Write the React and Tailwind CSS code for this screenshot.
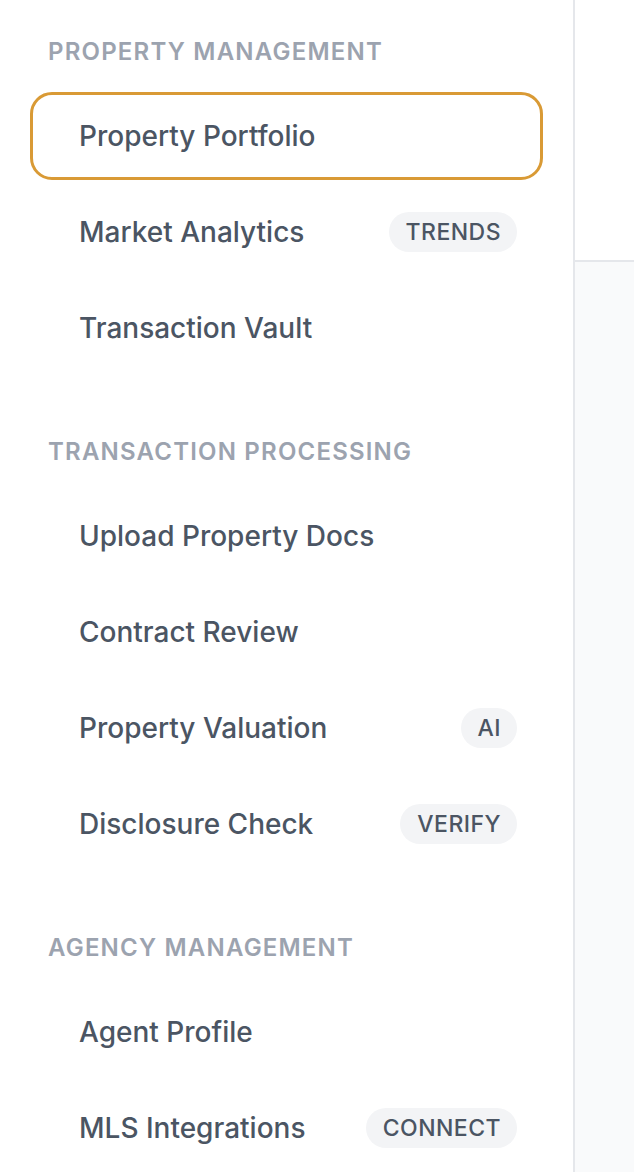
import React from 'react';

const sections = [
    {
        title: 'Property Management',
        items: [
            { label: 'Property Portfolio', active: true },
            { label: 'Market Analytics', badge: 'TRENDS' },
            { label: 'Transaction Vault' },
        ],
    },
    {
        title: 'Transaction Processing',
        items: [
            { label: 'Upload Property Docs' },
            { label: 'Contract Review' },
            { label: 'Property Valuation', badge: 'AI' },
            { label: 'Disclosure Check', badge: 'VERIFY' },
        ],
    },
    {
        title: 'Agency Management',
        items: [
            { label: 'Agent Profile' },
            { label: 'MLS Integrations', badge: 'CONNECT' },
        ],
    },
];

const NavItem = ({ item }) => (
    <a
        href="#"
        className={`flex h-[88px] items-center justify-between rounded-[22px] border-[3px] pl-[46px] pr-[23px] ${
            item.active ? 'border-[#d99a35] bg-white' : 'border-transparent'
        }`}
    >
        <span className="text-[28px] font-medium text-[#4b5563]">{item.label}</span>
        {item.badge && (
            <span className="flex h-[40px] items-center rounded-full bg-[#f3f4f6] pl-[17px] pr-[16px] text-[23px] font-medium tracking-[0.02em] text-[#4b5563]">
                {item.badge}
            </span>
        )}
    </a>
);

const App = () => {
    return (
        <div className="flex h-[1172px] overflow-hidden bg-white" style={{ fontFamily: 'Inter, "Noto Sans", sans-serif' }}>
            {/* Sidebar */}
            <aside className="w-[575px] shrink-0 border-r-2 border-[#e5e7eb] bg-white pt-[36px]">
                <nav className="pl-[30px] pr-[30px]">
                    {sections.map((section, i) => (
                        <div key={section.title} className={i > 0 ? 'mt-[64px]' : ''}>
                            <h3 className="mb-[24px] pl-[18px] text-[24px] leading-[32px] font-semibold uppercase tracking-wider text-[#9ca3af]">
                                {section.title}
                            </h3>
                            <div className="flex flex-col gap-[8px]">
                                {section.items.map(item => (
                                    <NavItem key={item.label} item={item} />
                                ))}
                            </div>
                        </div>
                    ))}
                </nav>
            </aside>

            {/* Main area */}
            <div className="flex flex-1 flex-col">
                <header className="h-[262px] shrink-0 border-b-2 border-[#e5e7eb] bg-white"></header>
                <main className="flex-1 bg-[#f9fafb]"></main>
            </div>
        </div>
    );
};

export default App;
